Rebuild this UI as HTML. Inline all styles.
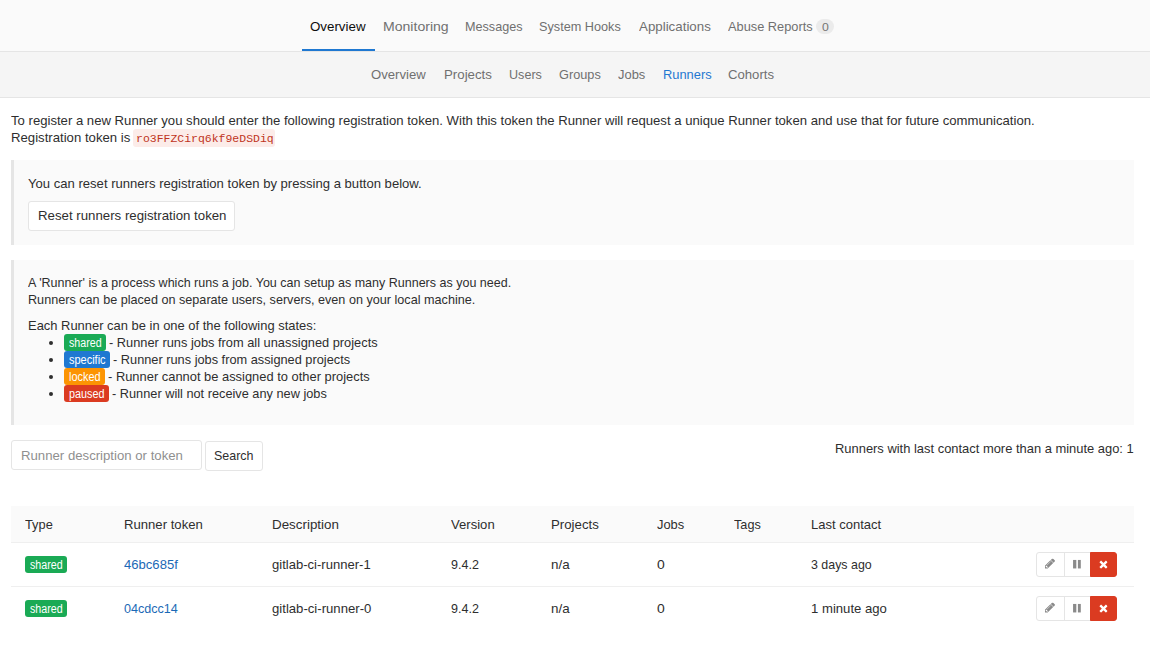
<!DOCTYPE html>
<html><head><meta charset="utf-8"><title>Runners</title>
<style>
html,body{margin:0;padding:0;background:#fff;}
body{width:1150px;height:647px;position:relative;overflow:hidden;font-family:"Liberation Sans",sans-serif;font-size:13.5px;line-height:17px;color:#2e2e2e;}
div{position:absolute;box-sizing:border-box;}
.t{position:absolute;display:block;white-space:pre;line-height:17px;transform-origin:0 0;text-decoration:none;font-family:"Liberation Sans",sans-serif;font-size:13.5px;font-weight:400;font-style:normal;margin:0;padding:0;background:none;border:0;}
#topnav{left:0;top:0;width:1150px;height:52px;background:#fafafa;border-bottom:1px solid #e5e5e5;}
#act{left:302px;top:49px;width:73px;height:2px;background:#1f78d1;}
#subnav{left:0;top:52px;width:1150px;height:46px;background:#f5f5f5;border-bottom:1px solid #e5e5e5;}
#badge{left:816px;top:19px;width:18px;height:15px;border-radius:8px;background:#ebebeb;}
#code{left:133px;top:129px;width:142px;height:17.5px;border-radius:3px;background:#fcece9;}
.callout{left:11px;width:1123px;background:#fafafa;border-left:3px solid #e5e5e5;}
.btn{background:#fff;border:1px solid #e5e5e5;border-radius:3px;box-sizing:content-box;}
.dot{left:48.75px;width:4.5px;height:4.5px;border-radius:50%;background:#2e2e2e;}
.lb{border-radius:3px;}
#inp{left:11px;top:440px;width:191px;height:30px;background:#fff;border:1px solid #e5e5e5;border-radius:3px;}
#thead{left:11px;top:506px;width:1123px;height:37px;background:#fafafa;border-bottom:1px solid #f0f0f0;}
.rb{left:11px;width:1123px;height:1px;background:#efefef;}
.bg{left:1036px;width:81px;height:25px;}
.b{top:0;height:25px;display:flex;align-items:center;justify-content:center;}
.be{left:0;width:29px;background:#fff;border:1px solid #e5e5e5;border-radius:3px 0 0 3px;}
.bp{left:28px;width:27px;background:#fff;border:1px solid #e5e5e5;border-left:1px solid #e5e5e5;border-right:none;}
.bx{left:54px;width:27px;background:#db3b21;border:1px solid #db3b21;border-radius:0 3px 3px 0;}
</style></head>
<body>

<div id="topnav"></div>
<div id="act"></div>
<div id="subnav"></div>
<div id="badge"></div>
<div id="code"></div>
<div class="callout" style="top:160px;height:85px"></div>
<div class="callout" style="top:260px;height:165px"></div>
<div class="btn" style="left:28px;top:201px;width:205px;height:28px"></div>
<div class="dot" style="top:340.75px"></div><div class="dot" style="top:357.75px"></div><div class="dot" style="top:374.75px"></div><div class="dot" style="top:391.75px"></div>
<div class="lb" style="left:64px;top:334.3px;width:42px;height:16.5px;background:#1aaa55"></div><div class="lb" style="left:64px;top:351.3px;width:46px;height:16.5px;background:#1f78d1"></div><div class="lb" style="left:64px;top:368.3px;width:41px;height:16.5px;background:#fc9403"></div><div class="lb" style="left:64px;top:385.3px;width:45px;height:16.5px;background:#db3b21"></div>
<div id="inp"></div>
<div class="btn" style="left:205px;top:441px;width:56px;height:28px"></div>
<div id="thead"></div>
<div class="rb" style="top:542px"></div><div class="rb" style="top:586px"></div>
<div class="lb" style="left:25px;top:556px;width:42px;height:16.5px;background:#1aaa55"></div><div class="lb" style="left:25px;top:600.2px;width:42px;height:16.5px;background:#1aaa55"></div>
<div class="bg" style="top:552px">
<div class="b be"><svg viewBox="0 0 1536 1536" width="10.2" height="10.2" style="transform:translate(-0.1px,-0.6px)"><path fill="#8a8a8a" d="M363 1408l91-91-235-235-91 91v107h128v128h107zm523-928q0-22-22-22-10 0-17 7l-542 542q-7 7-7 17 0 22 22 22 10 0 17-7l542-542q7-7 7-17zm-54-192l416 416-832 832h-416v-416zm683 96q0 53-37 90l-166 166-416-416 166-165q36-38 90-38 53 0 91 38l235 234q37 39 37 91z"/></svg></div><div class="b bp"><svg viewBox="0 0 10 11" width="8.8" height="8.8" preserveAspectRatio="none" style="transform:translate(-1.2px,-0.2px)"><rect x="0.3" y="0" width="3.7" height="11" fill="#8a8a8a"/><rect x="5.8" y="0" width="3.7" height="11" fill="#8a8a8a"/></svg></div><div class="b bx"><svg viewBox="0 0 10 10" width="9.6" height="9.6" style="transform:translate(-0.3px,-0.2px)"><path d="M1.6 1.6 L8.4 8.4 M8.4 1.6 L1.6 8.4" stroke="#fff" stroke-width="2.4" stroke-linecap="butt"/></svg></div></div><div class="bg" style="top:596px">
<div class="b be"><svg viewBox="0 0 1536 1536" width="10.2" height="10.2" style="transform:translate(-0.1px,-0.6px)"><path fill="#8a8a8a" d="M363 1408l91-91-235-235-91 91v107h128v128h107zm523-928q0-22-22-22-10 0-17 7l-542 542q-7 7-7 17 0 22 22 22 10 0 17-7l542-542q7-7 7-17zm-54-192l416 416-832 832h-416v-416zm683 96q0 53-37 90l-166 166-416-416 166-165q36-38 90-38 53 0 91 38l235 234q37 39 37 91z"/></svg></div><div class="b bp"><svg viewBox="0 0 10 11" width="8.8" height="8.8" preserveAspectRatio="none" style="transform:translate(-1.2px,-0.2px)"><rect x="0.3" y="0" width="3.7" height="11" fill="#8a8a8a"/><rect x="5.8" y="0" width="3.7" height="11" fill="#8a8a8a"/></svg></div><div class="b bx"><svg viewBox="0 0 10 10" width="9.6" height="9.6" style="transform:translate(-0.3px,-0.2px)"><path d="M1.6 1.6 L8.4 8.4 M8.4 1.6 L1.6 8.4" stroke="#fff" stroke-width="2.4" stroke-linecap="butt"/></svg></div></div>

<a class="t" style="left:310.30px;top:18.00px;transform:scaleX(0.9869);color:#0d0d0d">Overview</a>
<a class="t" style="left:383.20px;top:18.00px;transform:scaleX(1.0423);color:#707070">Monitoring</a>
<a class="t" style="left:465.40px;top:18.00px;transform:scaleX(0.9345);color:#707070">Messages</a>
<a class="t" style="left:539.30px;top:18.00px;transform:scaleX(0.9398);color:#707070">System Hooks</a>
<a class="t" style="left:638.50px;top:18.00px;transform:scaleX(0.9867);color:#707070">Applications</a>
<a class="t" style="left:727.80px;top:18.00px;transform:scaleX(0.9473);color:#707070">Abuse Reports</a>
<span class="t" style="left:821.50px;top:19.00px;transform:scaleX(1.1151);color:#757575;font-size:11px">0</span>
<a class="t" style="left:370.60px;top:66.00px;transform:scaleX(0.9722);color:#707070">Overview</a>
<a class="t" style="left:443.50px;top:66.00px;transform:scaleX(0.9832);color:#707070">Projects</a>
<a class="t" style="left:508.50px;top:66.00px;transform:scaleX(0.9321);color:#707070">Users</a>
<a class="t" style="left:558.50px;top:66.00px;transform:scaleX(0.9433);color:#707070">Groups</a>
<a class="t" style="left:618.10px;top:66.00px;transform:scaleX(0.9565);color:#707070">Jobs</a>
<a class="t" style="left:663.00px;top:66.00px;transform:scaleX(0.9529);color:#1f78d1">Runners</a>
<a class="t" style="left:728.30px;top:66.00px;transform:scaleX(0.9740);color:#707070">Cohorts</a>
<span class="t" style="left:11.10px;top:112.00px;transform:scaleX(0.9723);color:#2e2e2e">To register a new Runner you should enter the following registration token. With this token the Runner will request a unique Runner token and use that for future communication.</span>
<span class="t" style="left:11.10px;top:129.00px;transform:scaleX(0.9752);color:#2e2e2e">Registration token is</span>
<code class="t" style="left:135.90px;top:131.00px;transform:scaleX(1.0828);color:#c0341d;font-size:10.6px;font-family:'Liberation Mono',monospace">ro3FFZCirq6kf9eDSDiq</code>
<span class="t" style="left:27.70px;top:175.00px;transform:scaleX(0.9691);color:#2e2e2e">You can reset runners registration token by pressing a button below.</span>
<span class="t" style="left:37.80px;top:207.00px;transform:scaleX(0.9812);color:#2e2e2e">Reset runners registration token</span>
<span class="t" style="left:27.90px;top:274.00px;transform:scaleX(0.9265);color:#2e2e2e">A &#x27;Runner&#x27; is a process which runs a job. You can setup as many Runners as you need.</span>
<span class="t" style="left:27.90px;top:291.00px;transform:scaleX(0.9357);color:#2e2e2e">Runners can be placed on separate users, servers, even on your local machine.</span>
<span class="t" style="left:27.90px;top:317.00px;transform:scaleX(0.9580);color:#2e2e2e">Each Runner can be in one of the following states:</span>
<span class="t" style="left:108.90px;top:334.00px;transform:scaleX(0.9495);color:#2e2e2e">- Runner runs jobs from all unassigned projects</span>
<span class="t" style="left:112.90px;top:351.00px;transform:scaleX(0.9460);color:#2e2e2e">- Runner runs jobs from assigned projects</span>
<span class="t" style="left:107.80px;top:368.00px;transform:scaleX(0.9554);color:#2e2e2e">- Runner cannot be assigned to other projects</span>
<span class="t" style="left:111.70px;top:385.00px;transform:scaleX(0.9448);color:#2e2e2e">- Runner will not receive any new jobs</span>
<span class="t" style="left:69.10px;top:335.00px;transform:scaleX(0.8882);color:#fff;font-size:12px">shared</span>
<span class="t" style="left:69.10px;top:352.00px;transform:scaleX(0.9146);color:#fff;font-size:12px">specific</span>
<span class="t" style="left:69.10px;top:369.00px;transform:scaleX(0.9081);color:#fff;font-size:12px">locked</span>
<span class="t" style="left:69.10px;top:386.00px;transform:scaleX(0.8990);color:#fff;font-size:12px">paused</span>
<span class="t" style="left:21.00px;top:447.00px;transform:scaleX(0.9761);color:#8f8f8f">Runner description or token</span>
<span class="t" style="left:214.40px;top:447.00px;transform:scaleX(0.9240);color:#2e2e2e">Search</span>
<span class="t" style="left:834.50px;top:440.00px;transform:scaleX(0.9569);color:#2e2e2e">Runners with last contact more than a minute ago: 1</span>
<span class="t" style="left:25.00px;top:516.00px;transform:scaleX(0.9494);color:#2e2e2e">Type</span>
<span class="t" style="left:123.90px;top:516.00px;transform:scaleX(0.9720);color:#2e2e2e">Runner token</span>
<span class="t" style="left:272.10px;top:516.00px;transform:scaleX(0.9904);color:#2e2e2e">Description</span>
<span class="t" style="left:450.60px;top:516.00px;transform:scaleX(0.9700);color:#2e2e2e">Version</span>
<span class="t" style="left:551.10px;top:516.00px;transform:scaleX(0.9797);color:#2e2e2e">Projects</span>
<span class="t" style="left:656.90px;top:516.00px;transform:scaleX(0.9551);color:#2e2e2e">Jobs</span>
<span class="t" style="left:733.60px;top:516.00px;transform:scaleX(0.9386);color:#2e2e2e">Tags</span>
<span class="t" style="left:810.90px;top:516.00px;transform:scaleX(0.9641);color:#2e2e2e">Last contact</span>
<span class="t" style="left:30.10px;top:557.00px;transform:scaleX(0.8882);color:#fff;font-size:12px">shared</span>
<a class="t" style="left:123.90px;top:556.00px;transform:scaleX(0.9686);color:#1b69b6">46bc685f</a>
<span class="t" style="left:272.10px;top:556.00px;transform:scaleX(0.9671);color:#2e2e2e">gitlab-ci-runner-1</span>
<span class="t" style="left:450.60px;top:556.00px;transform:scaleX(0.9274);color:#2e2e2e">9.4.2</span>
<span class="t" style="left:551.10px;top:556.00px;transform:scaleX(0.9930);color:#2e2e2e">n/a</span>
<span class="t" style="left:656.90px;top:556.00px;transform:scaleX(1.0312);color:#2e2e2e">0</span>
<span class="t" style="left:810.90px;top:556.00px;transform:scaleX(0.9191);color:#2e2e2e">3 days ago</span>
<span class="t" style="left:30.10px;top:601.00px;transform:scaleX(0.8882);color:#fff;font-size:12px">shared</span>
<a class="t" style="left:123.90px;top:600.00px;transform:scaleX(0.9312);color:#1b69b6">04cdcc14</a>
<span class="t" style="left:272.10px;top:600.00px;transform:scaleX(0.9735);color:#2e2e2e">gitlab-ci-runner-0</span>
<span class="t" style="left:450.60px;top:600.00px;transform:scaleX(0.9274);color:#2e2e2e">9.4.2</span>
<span class="t" style="left:551.10px;top:600.00px;transform:scaleX(0.9930);color:#2e2e2e">n/a</span>
<span class="t" style="left:656.90px;top:600.00px;transform:scaleX(1.0312);color:#2e2e2e">0</span>
<span class="t" style="left:810.90px;top:600.00px;transform:scaleX(0.9727);color:#2e2e2e">1 minute ago</span>
</body></html>
